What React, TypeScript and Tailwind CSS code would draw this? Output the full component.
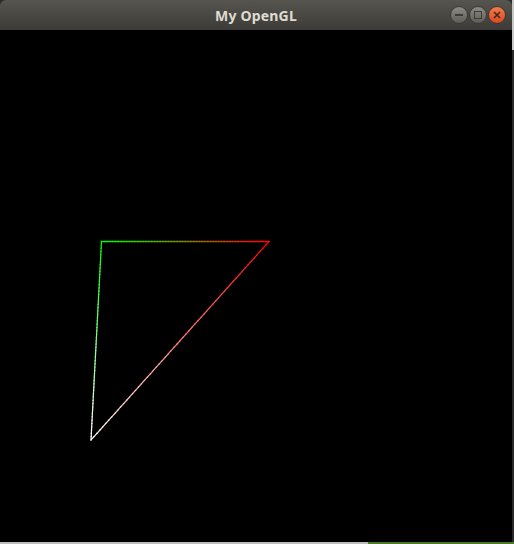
type Vtx = { x: number; y: number; c: [number, number, number] };

const green: Vtx = { x: 101.5, y: 241.5, c: [0, 255, 0] };
const red: Vtx = { x: 269, y: 241.5, c: [255, 0, 0] };
const white: Vtx = { x: 91, y: 440, c: [255, 255, 255] };

function Edge({ a, b, steps = 60, w = 1 }: { a: Vtx; b: Vtx; steps?: number; w?: number }) {
  const segs = [];
  for (let i = 0; i < steps; i++) {
    const t0 = i / steps;
    const t1 = (i + 1) / steps;
    const tm = (t0 + t1) / 2;
    const col = a.c.map((v, k) => Math.round(v + (b.c[k] - v) * tm));
    segs.push(
      <line
        key={i}
        x1={a.x + (b.x - a.x) * t0}
        y1={a.y + (b.y - a.y) * t0}
        x2={a.x + (b.x - a.x) * t1}
        y2={a.y + (b.y - a.y) * t1}
        stroke={`rgb(${col[0]},${col[1]},${col[2]})`}
        strokeWidth={w}
        strokeLinecap="square"
      />
    );
  }
  return <g>{segs}</g>;
}

export default function App() {
  return (
    <div className="w-[514px] h-[544px] bg-[#2b2b2b] flex flex-col overflow-hidden">
      <div className="flex flex-1">
        <div className="w-[512px] flex flex-col">
          <div className="h-[30px] relative rounded-t-[6px] bg-gradient-to-b from-[#56554f] to-[#3c3b37] flex items-center justify-center">
            <span className="text-[14px] font-bold text-[#dfdbd2] font-['Noto_Sans',sans-serif] tracking-[0.2px]">
              My OpenGL
            </span>
            <div className="absolute right-[6px] top-[6px] flex gap-[1px]">
              <div className="w-[18px] h-[18px] rounded-full bg-gradient-to-b from-[#8c8b86] to-[#5e5d58] border border-[#3a3935] flex items-center justify-center">
                <div className="w-[8px] h-[1.5px] bg-[#3c3b37]" />
              </div>
              <div className="w-[18px] h-[18px] rounded-full bg-gradient-to-b from-[#8c8b86] to-[#5e5d58] border border-[#3a3935] flex items-center justify-center">
                <div className="w-[8px] h-[8px] border-[1.5px] border-[#3c3b37]" />
              </div>
              <div className="w-[18px] h-[18px] rounded-full bg-gradient-to-b from-[#f47a4a] to-[#e0461a] border border-[#3a3935] flex items-center justify-center">
                <svg width="8" height="8" viewBox="0 0 8 8">
                  <path d="M1 1L7 7M7 1L1 7" stroke="#3c2a22" strokeWidth="1.6" />
                </svg>
              </div>
            </div>
          </div>
          <div className="flex-1 bg-black">
            <svg width="512" height="512" viewBox="0 30 512 512">
              <Edge a={green} b={red} w={1.4} />
              <Edge a={green} b={white} w={1.2} />
              <Edge a={red} b={white} w={1.2} />
            </svg>
          </div>
        </div>
        <div className="w-[2px] flex flex-col">
          <div className="h-[50px] bg-[#c8c8c8]" />
          <div className="flex-1 bg-[#2a2a2a]" />
        </div>
      </div>
      <div className="h-[2px] flex">
        <div className="w-[368px] bg-[#bdbdbd]" />
        <div className="flex-1 bg-[#4a7a2a]" />
      </div>
    </div>
  );
}
